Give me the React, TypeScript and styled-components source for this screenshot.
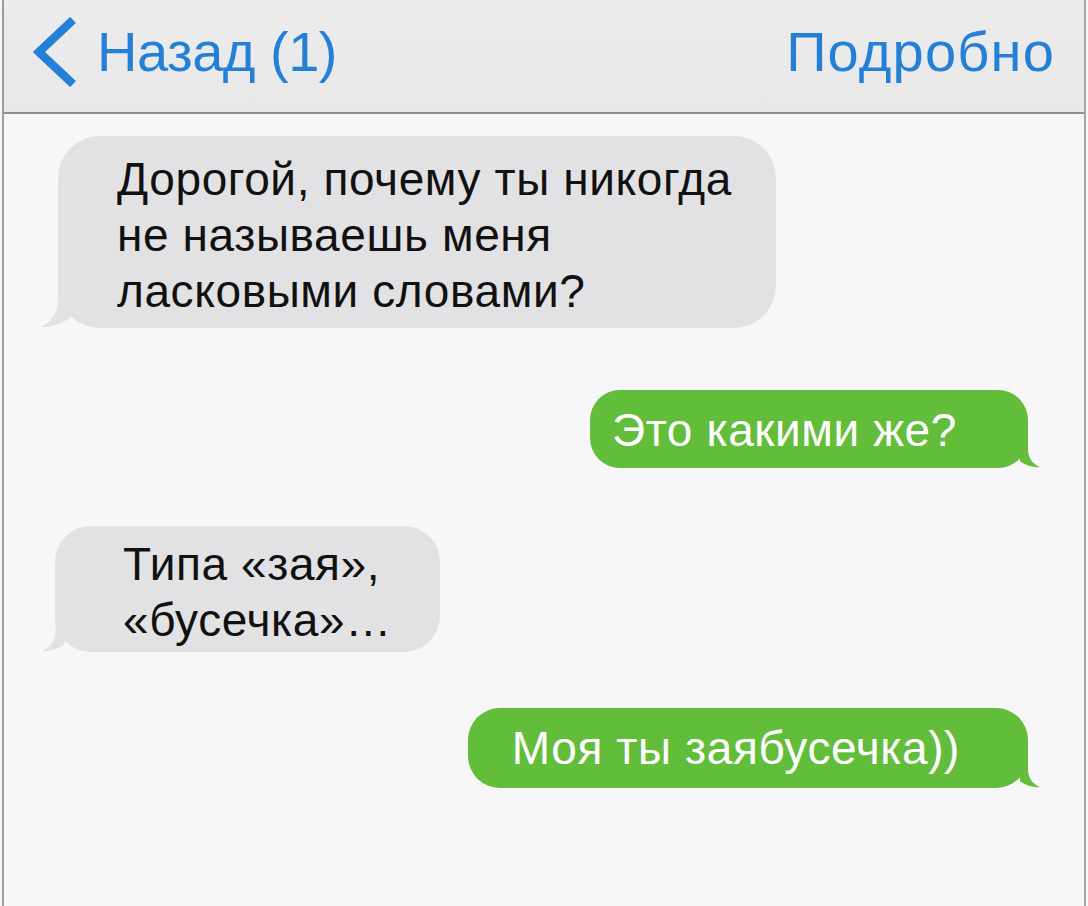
import React from 'react';
import styled, { createGlobalStyle } from 'styled-components';

const GlobalStyle = createGlobalStyle`
  html, body {
    margin: 0;
    padding: 0;
    background: #f7f6f8;
  }
  body {
    font-family: 'Liberation Sans', Arial, 'Noto Sans', sans-serif;
  }
`;

// Outer phone frame with thin grey edges
const Frame = styled.div`
  height: 906px;
  margin: 0 2px;
  border-left: 2px solid #9d9d9d;
  border-right: 2px solid #a5a5a5;
  background: #f7f6f8;
  box-sizing: border-box;
  display: flex;
  flex-direction: column;
`;

// Top navigation bar
const NavBar = styled.header`
  height: 114px;
  box-sizing: border-box;
  display: flex;
  align-items: center;
  justify-content: space-between;
  padding: 0 29px 8px 29px;
  background: linear-gradient(#ececec, #e8e8e8);
  border-bottom: 2px solid #8e8e8e;
`;

const NavButton = styled.div<{ $spacing?: number }>`
  display: flex;
  align-items: center;
  gap: 20px;
  color: #2480d6;
  font-size: 56px;
  letter-spacing: ${p => p.$spacing ?? -0.5}px;
  line-height: 1;
`;

const Thread = styled.main`
  flex: 1;
  display: flex;
  flex-direction: column;
  padding: 22px 56px 0 0;
`;

const Row = styled.div<{ $out?: boolean; $top: number; $indent?: number }>`
  display: flex;
  justify-content: ${p => (p.$out ? 'flex-end' : 'flex-start')};
  margin-top: ${p => p.$top}px;
  padding-left: ${p => p.$indent ?? 0}px;
`;

const Bubble = styled.div<{ $out?: boolean; $pad: string; $radius: number }>`
  position: relative;
  padding: ${p => p.$pad};
  border-radius: ${p => p.$radius}px;
  background: ${p => (p.$out ? '#62be3a' : '#e2e2e5')};
  color: ${p => (p.$out ? '#ffffff' : '#111111')};
  font-size: 46px;
  letter-spacing: 0.6px;
  line-height: 56px;
  white-space: nowrap;
`;

const TailSvg = styled.svg<{ $out?: boolean; $size: number }>`
  position: absolute;
  bottom: 0;
  width: ${p => p.$size}px;
  height: ${p => p.$size}px;
  ${p =>
    p.$out
      ? `right: ${-(p.$size * 18) / 48}px; transform: scaleX(-1);`
      : `left: ${-(p.$size * 18) / 48}px;`}
`;

const Tail: React.FC<{ out?: boolean; size: number; color: string }> = ({ out, size, color }) => (
  <TailSvg $out={out} $size={size} viewBox="0 0 48 48">
    <path
      d="M18 0 L18 20 C18 34 10 43 0 47 C10 47.5 22 44 30 38 L30 0 Z"
      fill={color}
    />
  </TailSvg>
);

const Chevron = () => (
  <svg width="44" height="70" viewBox="0 0 44 70">
    <polyline
      points="40,3 6,35 40,67"
      fill="none"
      stroke="#2480d6"
      strokeWidth="8.5"
      strokeLinejoin="miter"
    />
  </svg>
);

const App: React.FC = () => (
  <>
    <GlobalStyle />
    <Frame>
      <NavBar>
        <NavButton>
          <Chevron />
          <span>Назад (1)</span>
        </NavButton>
        <NavButton $spacing={1.2}>Подробно</NavButton>
      </NavBar>

      <Thread>
        <Row $top={0} $indent={54}>
          <Bubble $pad="15px 44px 9px 59px" $radius={42}>
            Дорогой, почему ты никогда
            <br />
            не называешь меня
            <br />
            ласковыми словами?
            <Tail size={48} color="#e2e2e5" />
          </Bubble>
        </Row>

        <Row $out $top={62}>
          <Bubble $out $pad="12px 71px 10px 22px" $radius={30}>
            Это какими же?
            <Tail out size={32} color="#62be3a" />
          </Bubble>
        </Row>

        <Row $top={58} $indent={51}>
          <Bubble $pad="10px 48px 4px 68px" $radius={36}>
            Типа «зая»,
            <br />
            «бусечка»…
            <Tail size={36} color="#e2e2e5" />
          </Bubble>
        </Row>

        <Row $out $top={56}>
          <Bubble $out $pad="12px 68px 12px 44px" $radius={32}>
            Моя ты заябусечка))
            <Tail out size={32} color="#62be3a" />
          </Bubble>
        </Row>
      </Thread>
    </Frame>
  </>
);

export default App;
